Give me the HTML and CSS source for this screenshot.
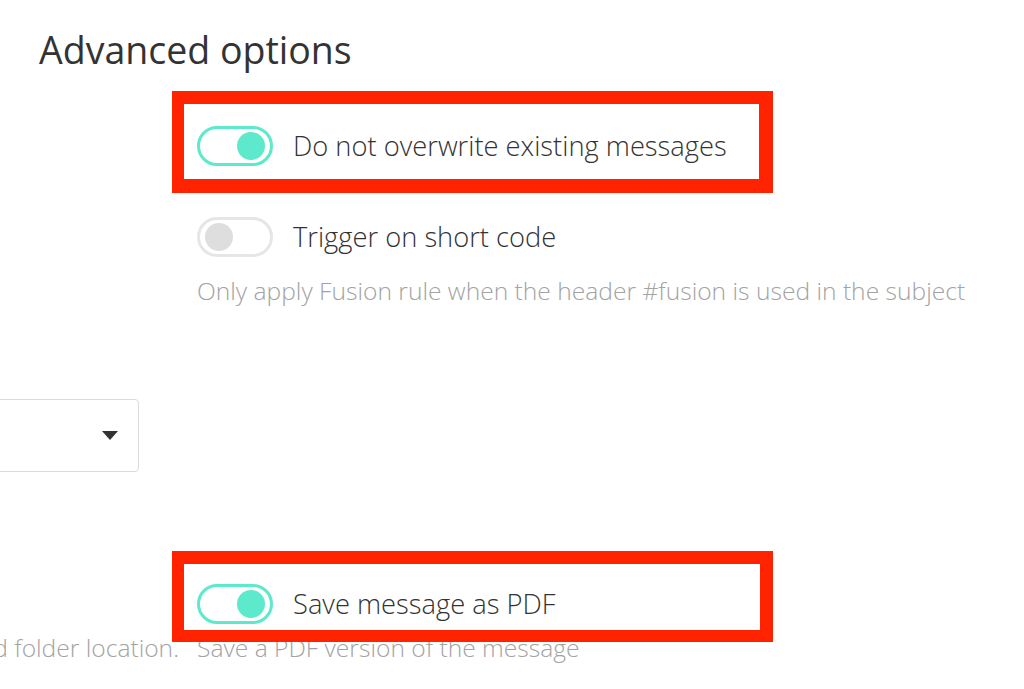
FILE: index.html
```html
<!DOCTYPE html>
<html lang="en">
<head>
<meta charset="utf-8">
<title>Advanced options</title>
<link rel="stylesheet" href="styles.css">
</head>
<body>
<main class="form">
  <h2 class="title">Advanced options</h2>
  <div class="grid">
    <div class="cell-left"></div>
    <div class="cell-right">
      <div class="option option-first">
        <span class="toggle toggle-on"><span class="knob"></span></span>
        <span class="label">Do not overwrite existing messages</span>
        <span class="annotation annotation-a"></span>
      </div>
      <div class="option option-second">
        <span class="toggle"><span class="knob"></span></span>
        <span class="label">Trigger on short code</span>
      </div>
      <p class="help">Only apply Fusion rule when the header #fusion is used in the subject</p>
    </div>

    <div class="cell-left cell-select">
      <div class="select">
        <span class="select-value"></span>
        <svg class="caret" width="16" height="9" viewBox="0 0 16 9"><path d="M0 0h16L8 9z" fill="#333"/></svg>
      </div>
    </div>
    <div class="cell-right"></div>

    <div class="cell-left cell-help">
      <p class="help help-left">Messages are moved to the selected folder location.</p>
    </div>
    <div class="cell-right cell-pdf">
      <div class="option">
        <span class="toggle toggle-on"><span class="knob"></span></span>
        <span class="label">Save message as PDF</span>
        <span class="annotation annotation-b"></span>
      </div>
      <p class="help help-pdf">Save a PDF version of the message</p>
    </div>
  </div>
</main>
</body>
</html>
```

FILE: styles.css
```css
* { box-sizing: border-box; }

html, body {
  margin: 0;
  padding: 0;
  background: #fff;
}

body {
  width: 1024px;
  height: 689px;
  overflow: hidden;
  font-family: "Open Sans", "Noto Sans", sans-serif;
  color: #333;
}

.form {
  padding-top: 28px;
}

.title {
  margin: 0 0 0 39px;
  font-size: 37.5px;
  line-height: 44px;
  font-weight: 400;
  color: #333;
}

.grid {
  display: grid;
  grid-template-columns: 179px 1fr;
  column-gap: 18px;
  margin-top: 54px;
}

.cell-left {
  display: flex;
  justify-content: flex-end;
}

.option {
  position: relative;
  display: flex;
  align-items: center;
  height: 40px;
}

.option-second {
  margin-top: 51px;
}

.toggle {
  display: flex;
  align-items: center;
  width: 76px;
  height: 40px;
  padding: 0 5px;
  border: 3px solid #e6e6e6;
  border-radius: 20px;
  flex: none;
}

.knob {
  width: 28px;
  height: 28px;
  border-radius: 50%;
  background: #dedede;
}

.toggle-on {
  justify-content: flex-end;
  border-color: #5de9cc;
}

.toggle-on .knob {
  background: #5de9cc;
}

.label {
  margin-left: 20px;
  font-size: 27.3px;
  line-height: 40px;
  font-weight: 300;
  color: #333;
  white-space: nowrap;
}

.help {
  margin: 17.5px 0 0 0;
  font-size: 24.6px;
  line-height: 32px;
  font-weight: 300;
  color: #a3a3a3;
  white-space: nowrap;
}

.cell-select {
  margin-top: 92px;
}

.select {
  display: flex;
  align-items: center;
  justify-content: flex-end;
  width: 300px;
  height: 73px;
  margin-right: 40px;
  padding-right: 20px;
  border: 1px solid #dcdcdc;
  border-radius: 4px;
  background: #fff;
  flex: none;
}

.caret {
  display: block;
}

.cell-pdf {
  margin-top: 112px;
}

.cell-help {
  align-items: flex-end;
}

.help-left {
  margin: 0;
}

.help-pdf {
  margin-top: 8.5px;
}

.annotation {
  position: absolute;
  left: -25px;
  width: 601px;
  border: 12px solid #ff2300;
  pointer-events: none;
  z-index: 2;
}

.annotation-a {
  top: -35px;
  height: 102px;
  border-width: 13px 14px 14px 12px;
}

.annotation-b {
  top: -33px;
  height: 91px;
  border-width: 13px 13px 12px 12px;
}
```
